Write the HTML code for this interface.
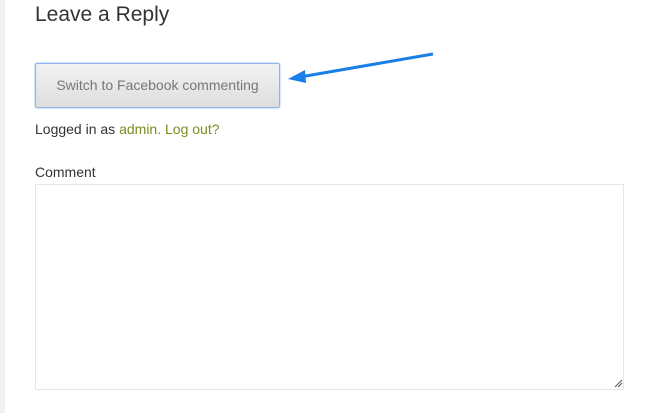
<!DOCTYPE html>
<html><head><style>
body{margin:0;width:668px;height:413px;background:#fff;font-family:"Liberation Sans",Arial,sans-serif;position:relative;overflow:hidden}
.strip{position:absolute;left:0;top:0;width:5px;height:413px;background:#f1f1f1}
h3{position:absolute;left:35px;top:3px;margin:0;font-weight:normal;font-size:21px;color:#333}
.btn{position:absolute;left:35px;top:63px;width:243px;height:43px;border:1px solid #8fb2e8;border-radius:2px;background:linear-gradient(#f2f2f2,#dedede);box-shadow:0 0 2px #9cc0f0;color:#777;font-size:14px;line-height:43px;text-align:center;box-sizing:content-box}
.log{position:absolute;left:35px;top:121px;font-size:14px;color:#333}
.log a{color:#7a8b22;text-decoration:none}
.lab{position:absolute;left:35px;top:164px;font-size:14px;color:#333}
.ta{position:absolute;left:35px;top:184px;width:587px;height:204px;border:1px solid #e6e6e6}
</style></head><body>
<div class="strip"></div>
<h3>Leave a Reply</h3>
<div class="btn">Switch to Facebook commenting</div>
<svg style="position:absolute;left:0;top:0" width="668" height="413">
<line x1="433" y1="54" x2="300" y2="77" stroke="#1a7fe8" stroke-width="3"/>
<polygon points="288,79 305,70 306,83" fill="#1a7fe8"/>
<g stroke="#555" stroke-width="1"><line x1="615" y1="387" x2="622" y2="380"/><line x1="618" y1="387" x2="622" y2="383"/></g>
</svg>
<div class="log">Logged in as <a>admin.</a> <a>Log out?</a></div>
<div class="lab">Comment</div>
<div class="ta"></div>
</body></html>
